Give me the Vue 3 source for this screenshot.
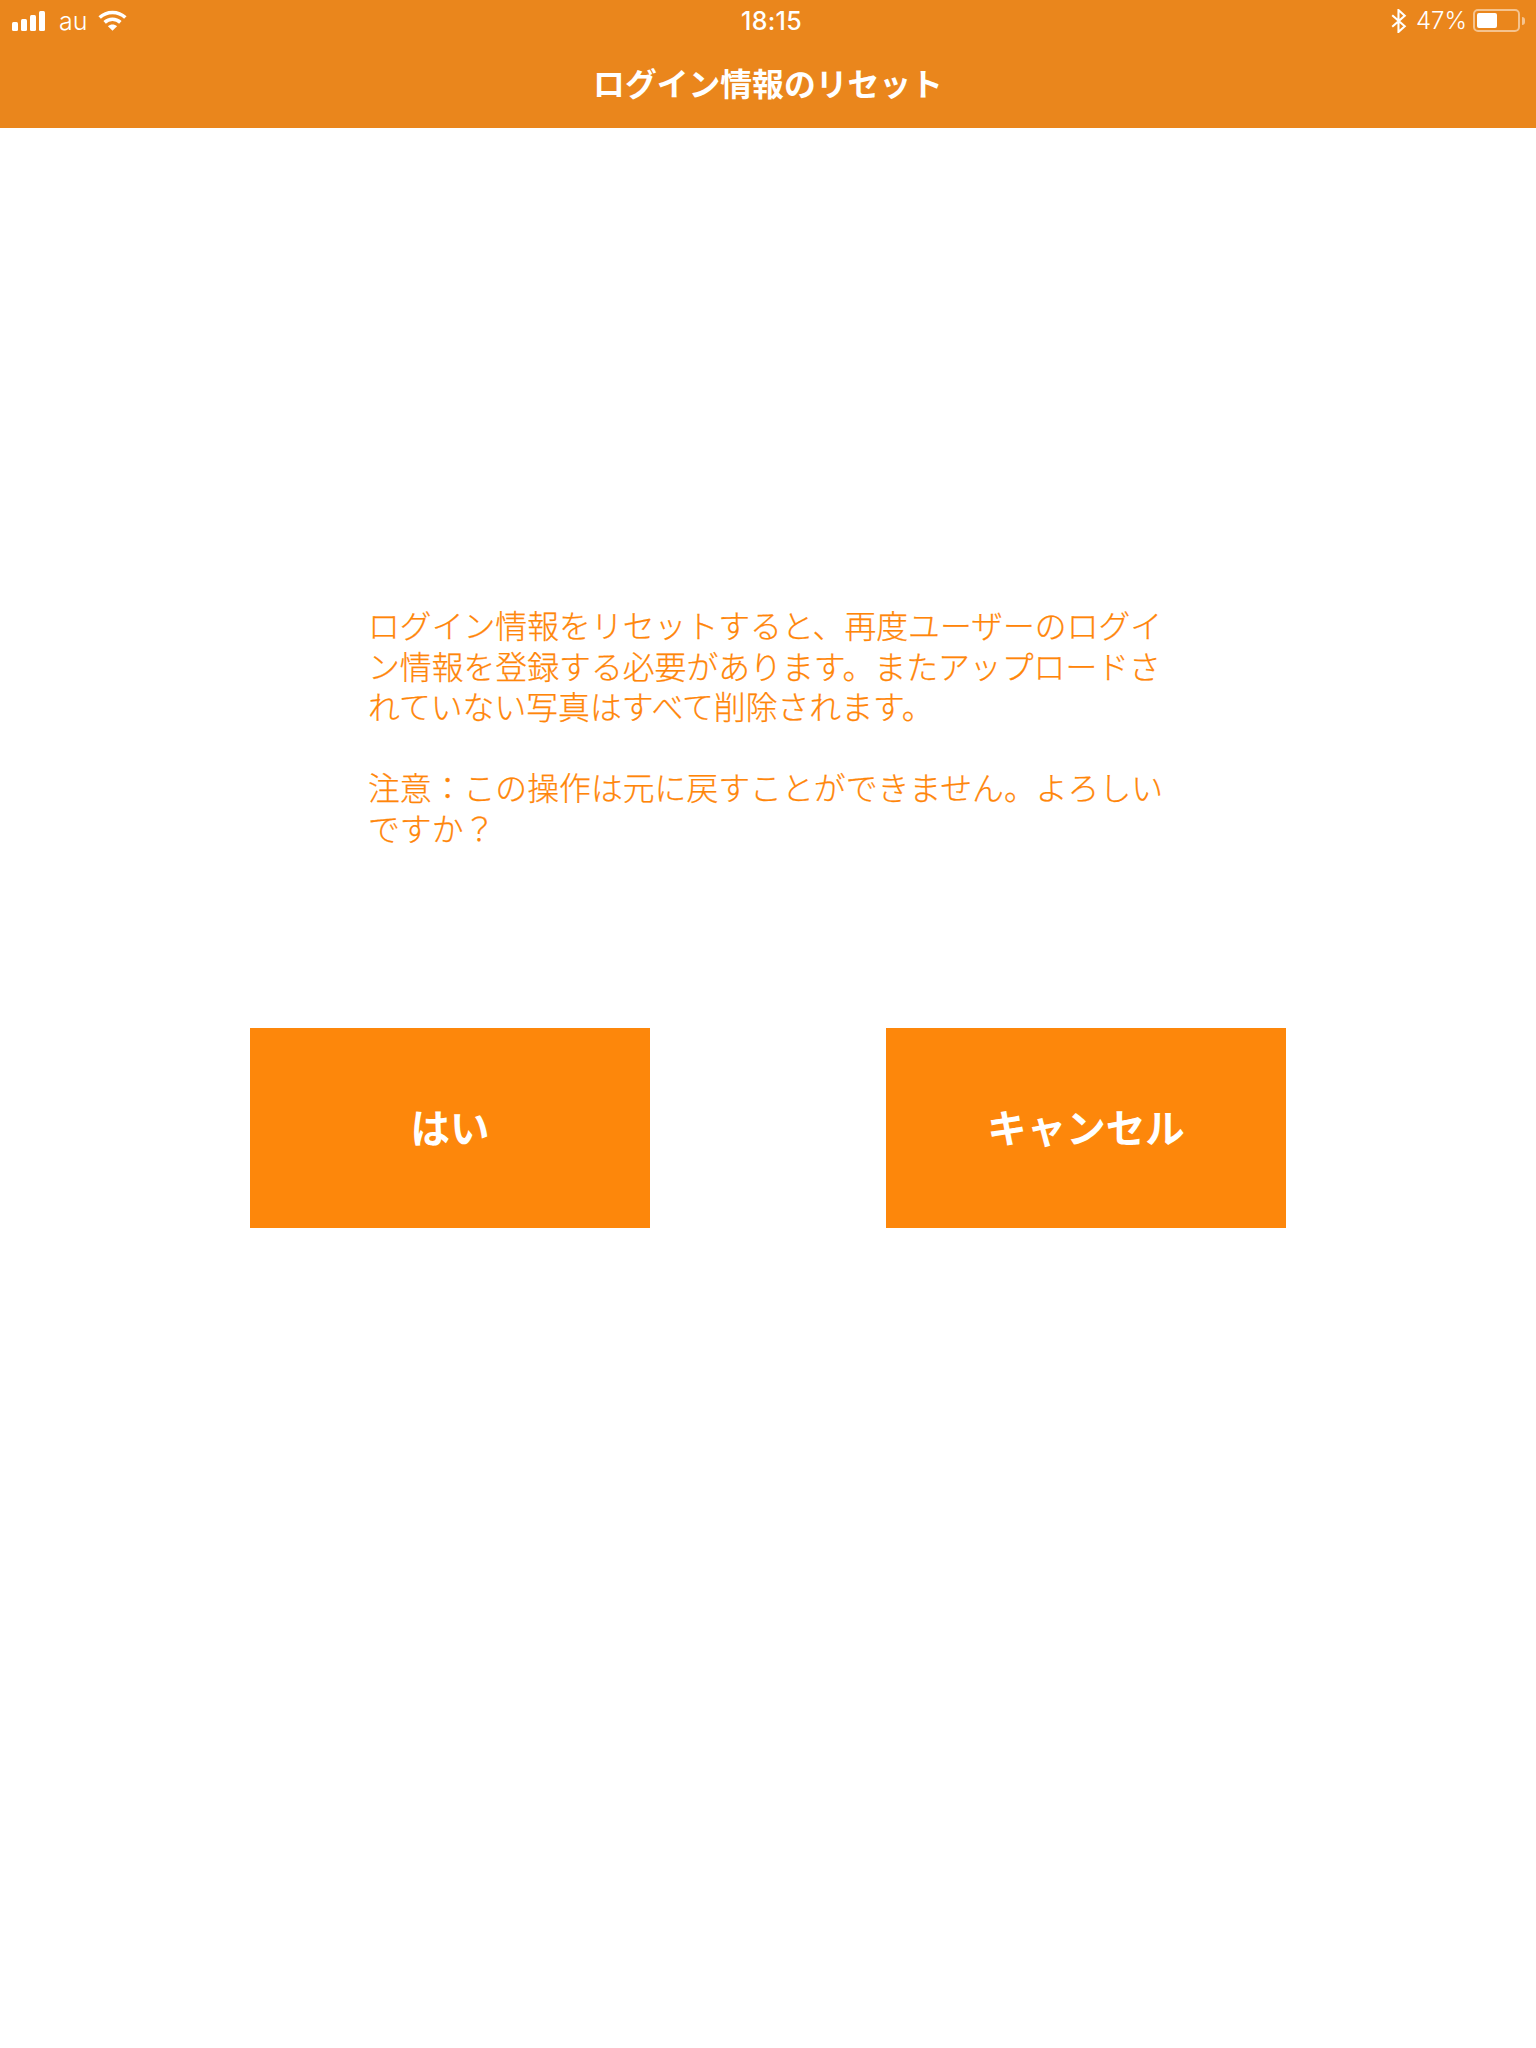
<script setup>
const actions = ['はい', 'キャンセル']
</script>

<template>
  <div class="page">
    <header class="header">
      <div class="status">
        <div class="status-left">
          <svg class="signal" width="33" height="20" viewBox="0 0 33 20" fill="#fff">
            <rect x="0" y="11" width="6" height="9" rx="1.5" />
            <rect x="9" y="8" width="6" height="12" rx="1.5" />
            <rect x="18" y="4" width="6" height="16" rx="1.5" />
            <rect x="27" y="0" width="6" height="20" rx="1.5" />
          </svg>
          <span class="carrier">au</span>
          <svg class="wifi" width="29" height="21" viewBox="0 0 28 20" fill="none" stroke="#fff" stroke-width="3.4">
            <path d="M1.6 7.2C8.4 .6 19.6 .6 26.4 7.2" />
            <path d="M6.4 11.8C10.6 7.8 17.4 7.8 21.6 11.8" />
            <path d="M14 20 9.6 15.6C12 13.4 16 13.4 18.4 15.6Z" fill="#fff" stroke="none" />
          </svg>
        </div>
        <div class="time">18:15</div>
        <div class="status-right">
          <svg class="bt" width="16" height="24" viewBox="0 0 15 23" fill="none" stroke="#fff" stroke-width="2">
            <path d="M1 6 13 16.5 7 22V1L13 6.5 1 17" />
          </svg>
          <span class="percent">47%</span>
          <div class="battery">
            <div class="battery-level"></div>
          </div>
          <div class="battery-tip"></div>
        </div>
      </div>
      <h1 class="title">ログイン情報のリセット</h1>
    </header>
    <main class="main">
      <div class="message">
        <p>ログイン情報をリセットすると、再度ユーザーのログイン情報を登録する必要があります。またアップロードされていない写真はすべて削除されます。</p>
        <p>注意：この操作は元に戻すことができません。よろしいですか？</p>
      </div>
      <div class="actions">
        <button v-for="label in actions" :key="label" class="action" type="button">{{ label }}</button>
      </div>
    </main>
  </div>
</template>

<style>
html, body { margin: 0; background: #fff; }
</style>

<style scoped>
.page {
  min-height: 2048px;
  background: #fff;
  font-family: "Noto Sans CJK JP", "Noto Sans", sans-serif;
}
.header {
  height: 128px;
  background: #ea861c;
  color: #fff;
  box-sizing: border-box;
}
.status {
  height: 41px;
  display: grid;
  grid-template-columns: 1fr auto 1fr;
  align-items: center;
  padding: 0 11px 0 12px;
  font-family: Inter, "Liberation Sans", sans-serif;
}
.status-left { display: flex; align-items: center; }
.carrier { margin-left: 14px; font-size: 25px; font-weight: 300; line-height: 40px; }
.wifi { margin-left: 11px; margin-top: -1px; }
.time {
  font-size: 25px;
  font-weight: 500;
  margin-left: 6px;
  letter-spacing: 0.3px;
}
.status-right { display: flex; align-items: center; justify-content: flex-end; }
.percent { margin-left: 9px; font-size: 24px; font-weight: 300; }
.battery {
  margin-left: 6px;
  width: 47px;
  height: 23px;
  box-sizing: border-box;
  border: 2px solid rgba(255, 255, 255, 0.5);
  border-radius: 5px;
  padding: 2px;
}
.battery-level { width: 20px; height: 100%; background: #fff; border-radius: 2px; }
.battery-tip {
  margin-left: 2px;
  width: 3px;
  height: 8px;
  background: rgba(255, 255, 255, 0.5);
  border-radius: 0 3px 3px 0;
}
.title {
  margin: 0;
  height: 87px;
  line-height: 83px;
  text-align: center;
  font-size: 31.8px;
  font-weight: 700;
}
.main { padding-top: 476px; }
.message {
  width: 800px;
  margin: 0 auto;
  color: #ff8609;
  font-size: 31.85px;
  line-height: 40.5px;
  font-weight: 300;
  -webkit-text-stroke: 0.25px #ff8609;
}
.message p { margin: 0; }
.message p + p { margin-top: 40.5px; }
.actions {
  display: flex;
  justify-content: center;
  gap: 236px;
  margin-top: 181px;
}
.action {
  width: 400px;
  height: 200px;
  border: none;
  padding: 0 0 5px;
  background: #fd870b;
  color: #fff;
  font-family: inherit;
  font-size: 39.5px;
  font-weight: 700;
}
</style>
